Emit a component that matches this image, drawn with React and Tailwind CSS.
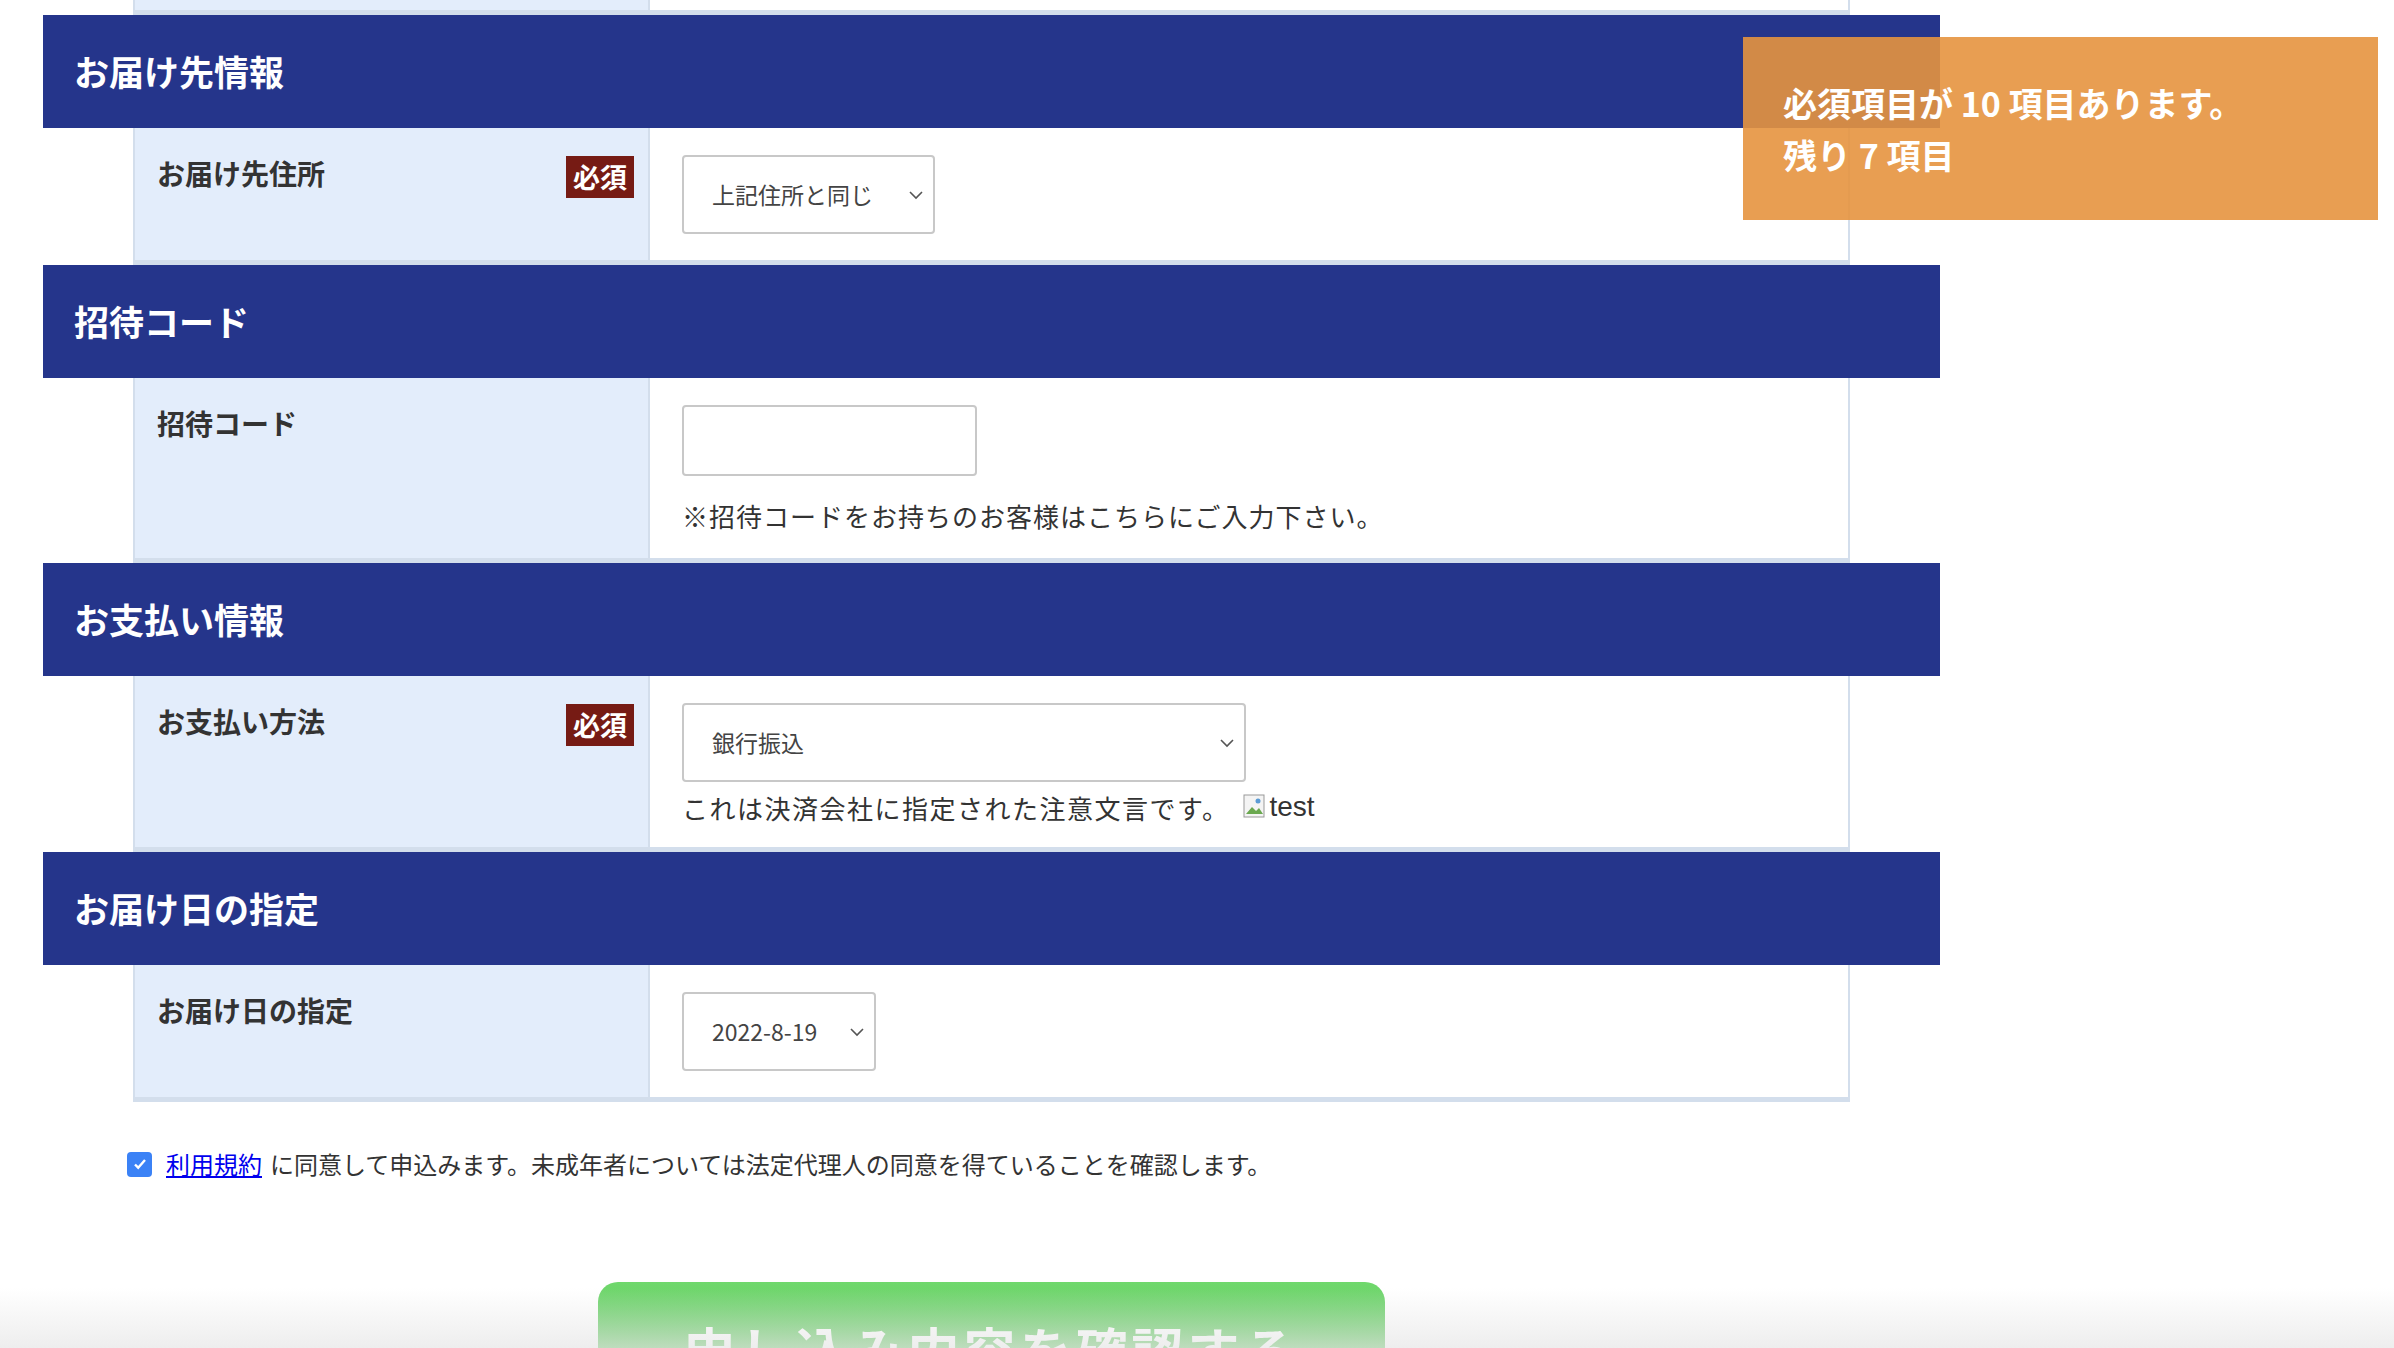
const font = { fontFamily: '"Noto Sans CJK JP", "Liberation Sans", sans-serif' };

function Header({ title }) {
  return (
    <div className="h-[113px] bg-[#25358b] flex items-center pl-[31px] text-white text-[35px] font-bold">{title}</div>
  );
}

function Row({ label, required, height, children }) {
  return (
    <div className="ml-[90px] w-[1717px] flex border-x-2 border-b-[5px] border-[#d3deec]" style={{ height }}>
      <div className="w-[515px] bg-[#e3edfb] border-r-2 border-[#d3deec] flex justify-between pl-[22px] pr-[14px] pt-[24px]">
        <span className="text-[28px] font-bold text-[#333]">{label}</span>
        {required && (
          <span className="h-[42px] mt-[4px] px-[7px] bg-[#761b14] text-white text-[27px] font-bold leading-[42px]">必須</span>
        )}
      </div>
      <div className="flex-1 pl-[32px] pt-[27px] text-[#333]">{children}</div>
    </div>
  );
}

function Select({ value, w }) {
  return (
    <div className="h-[79px] border-2 border-[#c8c8c8] rounded-[4px] bg-white flex items-center justify-between pl-[28px] pr-[8px] text-[23px] text-[#444]" style={{ width: w }}>
      <span>{value}</span>
      <svg width="18" height="12" viewBox="0 0 18 12"><path d="M3 3l6 6 6-6" fill="none" stroke="#555" strokeWidth="1.6" /></svg>
    </div>
  );
}

export default function App() {
  return (
    <div className="relative w-[2394px] h-[1348px] overflow-hidden bg-white" style={font}>
      <div className="pl-[43px] w-[1940px]">
        <div className="ml-[90px] w-[1717px] h-[15px] flex border-x-2 border-b-[5px] border-[#d3deec]">
          <div className="w-[515px] bg-[#e3edfb] border-r-2 border-[#d3deec]" />
        </div>
        <Header title="お届け先情報" />
        <Row label="お届け先住所" required height={137}>
          <Select value="上記住所と同じ" w={253} />
        </Row>
        <Header title="招待コード" />
        <Row label="招待コード" height={185}>
          <div className="w-[295px] h-[71px] border-2 border-[#c8c8c8] rounded-[4px]" />
          <div className="mt-[20px] text-[26px] tracking-[1px]">※招待コードをお持ちのお客様はこちらにご入力下さい。</div>
        </Row>
        <Header title="お支払い情報" />
        <Row label="お支払い方法" required height={176}>
          <Select value="銀行振込" w={564} />
          <div className="mt-[4px] flex items-center text-[26px] tracking-[1.5px]">
            <span>これは決済会社に指定された注意文言です。</span>
            <span className="ml-[14px] flex items-center text-[28px] tracking-normal" style={{ fontFamily: '"Liberation Sans", sans-serif' }}>
              <svg width="24" height="26" viewBox="0 0 24 26" className="mr-[2px]">
                <rect x="1" y="1" width="20" height="22" fill="#f4f4f4" stroke="#999" />
                <path d="M3 20l6-7 4 4 3-3 4 6z" fill="#6aa84f" />
                <circle cx="15" cy="7" r="2.5" fill="#5b9bd5" />
              </svg>
              test
            </span>
          </div>
        </Row>
        <Header title="お届け日の指定" />
        <Row label="お届け日の指定" height={137}>
          <Select value="2022-8-19" w={194} />
        </Row>
      </div>

      <div className="mt-[44px] pl-[127px] flex items-center text-[24px] text-[#333]">
        <span className="w-[25px] h-[25px] rounded-[4px] bg-[#3b82f6] flex items-center justify-center mr-[14px]">
          <svg width="16" height="16" viewBox="0 0 16 16"><path d="M3 8.5l3.2 3.2L13 4" fill="none" stroke="white" strokeWidth="2.4" /></svg>
        </span>
        <a className="text-[#0000ee] underline mr-[8px]">利用規約</a>
        <span>に同意して申込みます。未成年者については法定代理人の同意を得ていることを確認します。</span>
      </div>

      <div className="ml-[598px] mt-[100px] w-[787px] h-[120px] rounded-t-[20px] bg-gradient-to-b from-[#6fd86c] to-[#56b856] text-white text-[52px] font-bold text-center pt-[42px] leading-[52px] tracking-[4px]">
        申し込み内容を確認する
      </div>

      <div className="absolute left-0 right-0 bottom-0 h-[60px] bg-gradient-to-b from-transparent to-[#e6e6e6]/70 pointer-events-none" />

      <div className="absolute left-[1743px] top-[37px] w-[635px] h-[183px] bg-[#e5933f]/90 text-white text-[34px] font-bold pl-[40px] pt-[40px] leading-[52px]">
        <div>必須項目が 10 項目あります。</div>
        <div>残り 7 項目</div>
      </div>
    </div>
  );
}
